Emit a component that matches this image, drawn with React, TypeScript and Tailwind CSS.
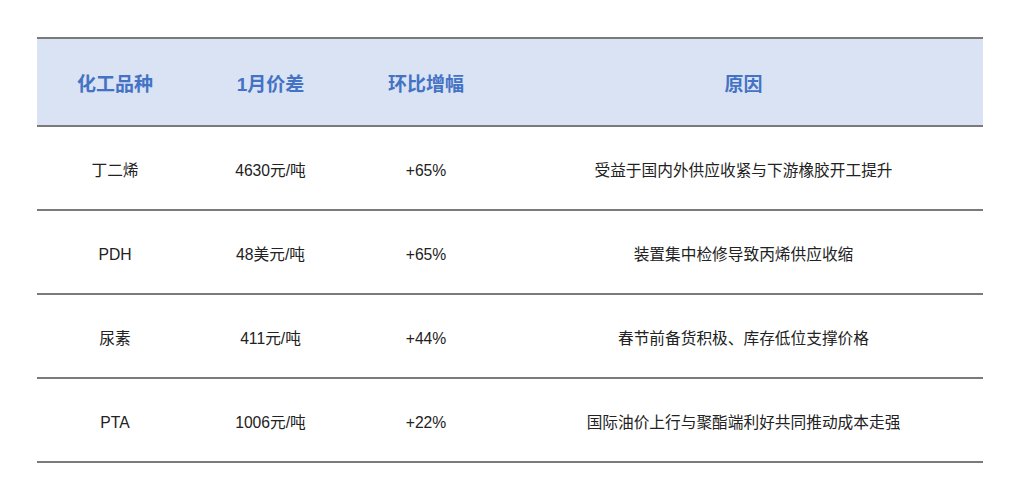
const rows = [
  { name: '丁二烯', spread: '4630元/吨', change: '+65%', reason: '受益于国内外供应收紧与下游橡胶开工提升' },
  { name: 'PDH', spread: '48美元/吨', change: '+65%', reason: '装置集中检修导致丙烯供应收缩' },
  { name: '尿素', spread: '411元/吨', change: '+44%', reason: '春节前备货积极、库存低位支撑价格' },
  { name: 'PTA', spread: '1006元/吨', change: '+22%', reason: '国际油价上行与聚酯端利好共同推动成本走强' },
];

export default function App() {
  return (
    <div
      className="w-[1013px] h-[496px] bg-white pt-[37px] pl-[37px]"
      style={{ fontFamily: '"Liberation Sans", "Noto Sans CJK SC", sans-serif' }}
    >
      <div className="w-[946px] border-t-2 border-[#7a7a7a]">
        {/* header */}
        <div className="grid grid-cols-[156px_155px_156px_479px] h-[88px] pt-[7px] items-center bg-[#dae3f3] border-b-2 border-[#7a7a7a] text-[19px] font-bold text-[#4472c4]">
          <div className="text-center">化工品种</div>
          <div className="text-center">1月价差</div>
          <div className="text-center">环比增幅</div>
          <div className="text-center">原因</div>
        </div>
        {rows.map((r) => (
          <div
            key={r.name}
            className="grid grid-cols-[156px_155px_156px_479px] h-[84px] pt-[5px] items-center border-b-2 border-[#7a7a7a] text-[15.7px] text-[#222]"
          >
            <div className="text-center">{r.name}</div>
            <div className="text-center">{r.spread}</div>
            <div className="text-center">{r.change}</div>
            <div className="text-center">{r.reason}</div>
          </div>
        ))}
      </div>
    </div>
  );
}
